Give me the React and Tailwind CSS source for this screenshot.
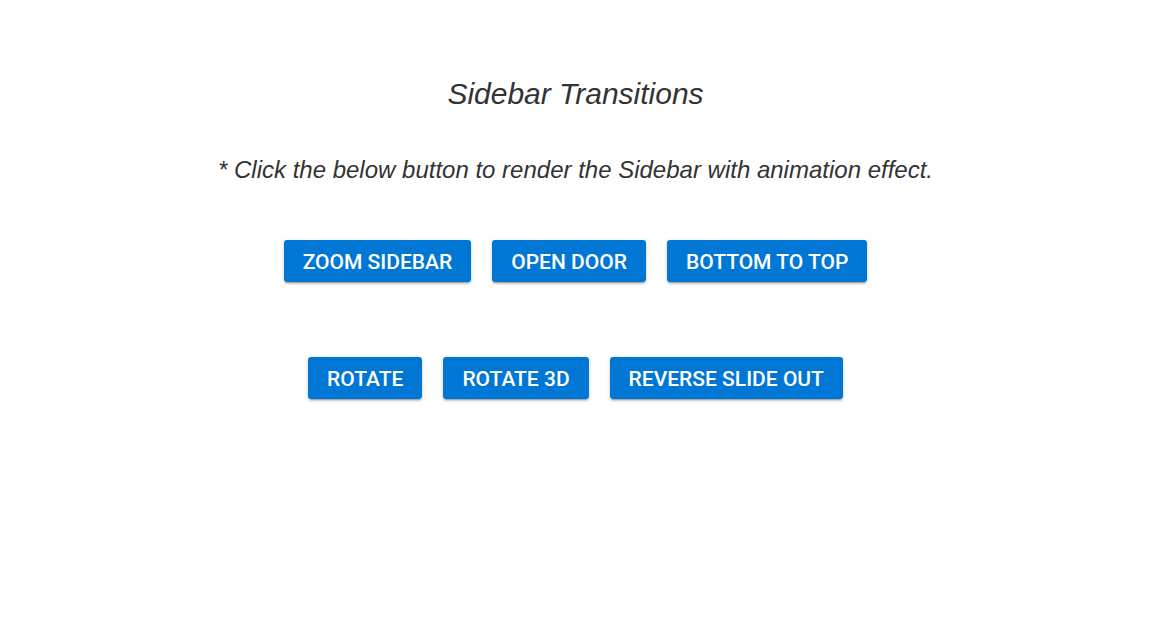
import React from 'react';

const rows = [
  ['Zoom Sidebar', 'Open Door', 'Bottom to Top'],
  ['Rotate', 'Rotate 3D', 'Reverse Slide Out'],
];

function App() {
  return (
    <div className="min-h-screen bg-white pr-[25px]">
      <div className="flex flex-col items-center pt-[76px]">
        <h1 className="text-[30px] leading-[36px] italic text-[#333] font-['Liberation_Sans',Arial,sans-serif]">
          Sidebar Transitions
        </h1>
        <p className="mt-[44px] text-[24px] leading-[28px] italic text-[#333] font-['Liberation_Sans',Arial,sans-serif]">
          * Click the below button to render the Sidebar with animation effect.
        </p>
        <div className="mt-[56px] flex flex-col gap-[75px]">
          {rows.map((row, i) => (
            <div key={i} className="flex justify-center gap-[21px]">
              {row.map((label) => (
                <button
                  key={label}
                  className="h-[42px] px-[19px] pt-[4px] rounded-[3px] bg-[#0177d5] text-white uppercase font-medium text-[21px] font-['Roboto',sans-serif] shadow-[0_3px_1px_-2px_rgba(0,0,0,0.2),0_2px_2px_0_rgba(0,0,0,0.14),0_1px_5px_0_rgba(0,0,0,0.12)]"
                >
                  {label}
                </button>
              ))}
            </div>
          ))}
        </div>
      </div>
    </div>
  );
}

export default App;
